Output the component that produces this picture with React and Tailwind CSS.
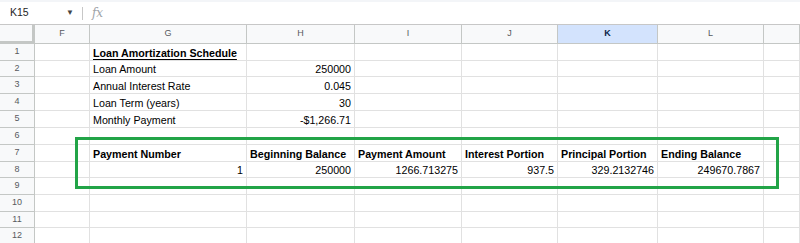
import React from 'react';

const cols = ['F', 'G', 'H', 'I', 'J', 'K', 'L', ''];
const heights = ['h-[17px]', 'h-[16px]', 'h-[17px]', 'h-[17px]', 'h-[17px]', 'h-[17px]', 'h-[17px]', 'h-[16px]', 'h-[17px]', 'h-[17px]', 'h-[16px]', 'h-[17px]'];

// cells per row: [F, G, H, I, J, K, L, M] -> { t: text, r: right aligned, b: bold, u: underline }
const rows = {
  1: { G: { t: 'Loan Amortization Schedule', b: true, u: true } },
  2: { G: { t: 'Loan Amount' }, H: { t: '250000', r: true } },
  3: { G: { t: 'Annual Interest Rate' }, H: { t: '0.045', r: true } },
  4: { G: { t: 'Loan Term (years)' }, H: { t: '30', r: true } },
  5: { G: { t: 'Monthly Payment' }, H: { t: '-$1,266.71', r: true } },
  7: {
    G: { t: 'Payment Number', b: true },
    H: { t: 'Beginning Balance', b: true },
    I: { t: 'Payment Amount', b: true },
    J: { t: 'Interest Portion', b: true },
    K: { t: 'Principal Portion', b: true },
    L: { t: 'Ending Balance', b: true },
  },
  8: {
    G: { t: '1', r: true },
    H: { t: '250000', r: true },
    I: { t: '1266.713275', r: true },
    J: { t: '937.5', r: true },
    K: { t: '329.2132746', r: true },
    L: { t: '249670.7867', r: true },
  },
};

const grid = 'grid grid-cols-[35px_55px_157px_108px_107px_96px_100px_106px_1fr]';

function Cell({ cell, h }) {
  return (
    <div className={`${h} border-r border-b border-[#e1e1e1] flex items-end px-[3px] overflow-visible whitespace-nowrap ${cell && cell.r ? 'justify-end' : ''}`}>
      {cell && (
        <span className={`leading-[13px] ${cell.b ? 'font-bold' : ''} ${cell.u ? 'underline underline-offset-[2px]' : ''} text-black`}>{cell.t}</span>
      )}
    </div>
  );
}

export default function App() {
  return (
    <div className="relative w-[800px] h-[243px] overflow-hidden bg-white font-['Liberation_Sans',Arial,sans-serif] text-[10.7px]">
      <div className="h-[2px] bg-[#f3f5f8]" />
      <div className="h-[23px] flex items-center border-b border-[#c7c7c7]">
        <span className="ml-[10px] w-[50px] text-[10.5px] text-[#1f1f1f]">K15</span>
        <span className="ml-[6px] text-[8px] text-[#444]">▼</span>
        <div className="ml-[8px] w-px h-[13px] bg-[#c7c7c7]" />
        <span className="ml-[9px] text-[12px] italic text-[#a0a4a8] font-['DejaVu_Serif',serif]">fx</span>
      </div>

      <div className={`${grid} h-[19px] bg-[#f8f9fa] text-[9px] text-[#575a5e]`}>
        <div className="bg-[#f8f9fa] border-r-[3px] border-b-[3px] border-[#c4c7c5]" />
        {cols.map((c, i) => (
          <div
            key={i}
            className={`flex items-center justify-center border-r border-b border-[#c4c7c5] ${c === 'K' ? 'bg-[#d3e3fd] text-[#0b1f4a] font-bold' : ''}`}
          >
            {c}
          </div>
        ))}
      </div>

      {heights.map((h, idx) => {
        const n = idx + 1;
        const r = rows[n] || {};
        return (
          <div key={n} className={grid}>
            <div className={`${h} flex items-center justify-center bg-[#f8f9fa] border-r border-b border-[#c4c7c5] text-[9px] text-[#575a5e]`}>
              {n}
            </div>
            {['F', 'G', 'H', 'I', 'J', 'K', 'L', 'M'].map((c) => (
              <Cell key={c} cell={r[c]} h={h} />
            ))}
          </div>
        );
      })}

      <div className="absolute left-[75px] top-[137px] w-[704px] h-[52px] border-[3px] border-[#22a447] pointer-events-none" />
    </div>
  );
}
